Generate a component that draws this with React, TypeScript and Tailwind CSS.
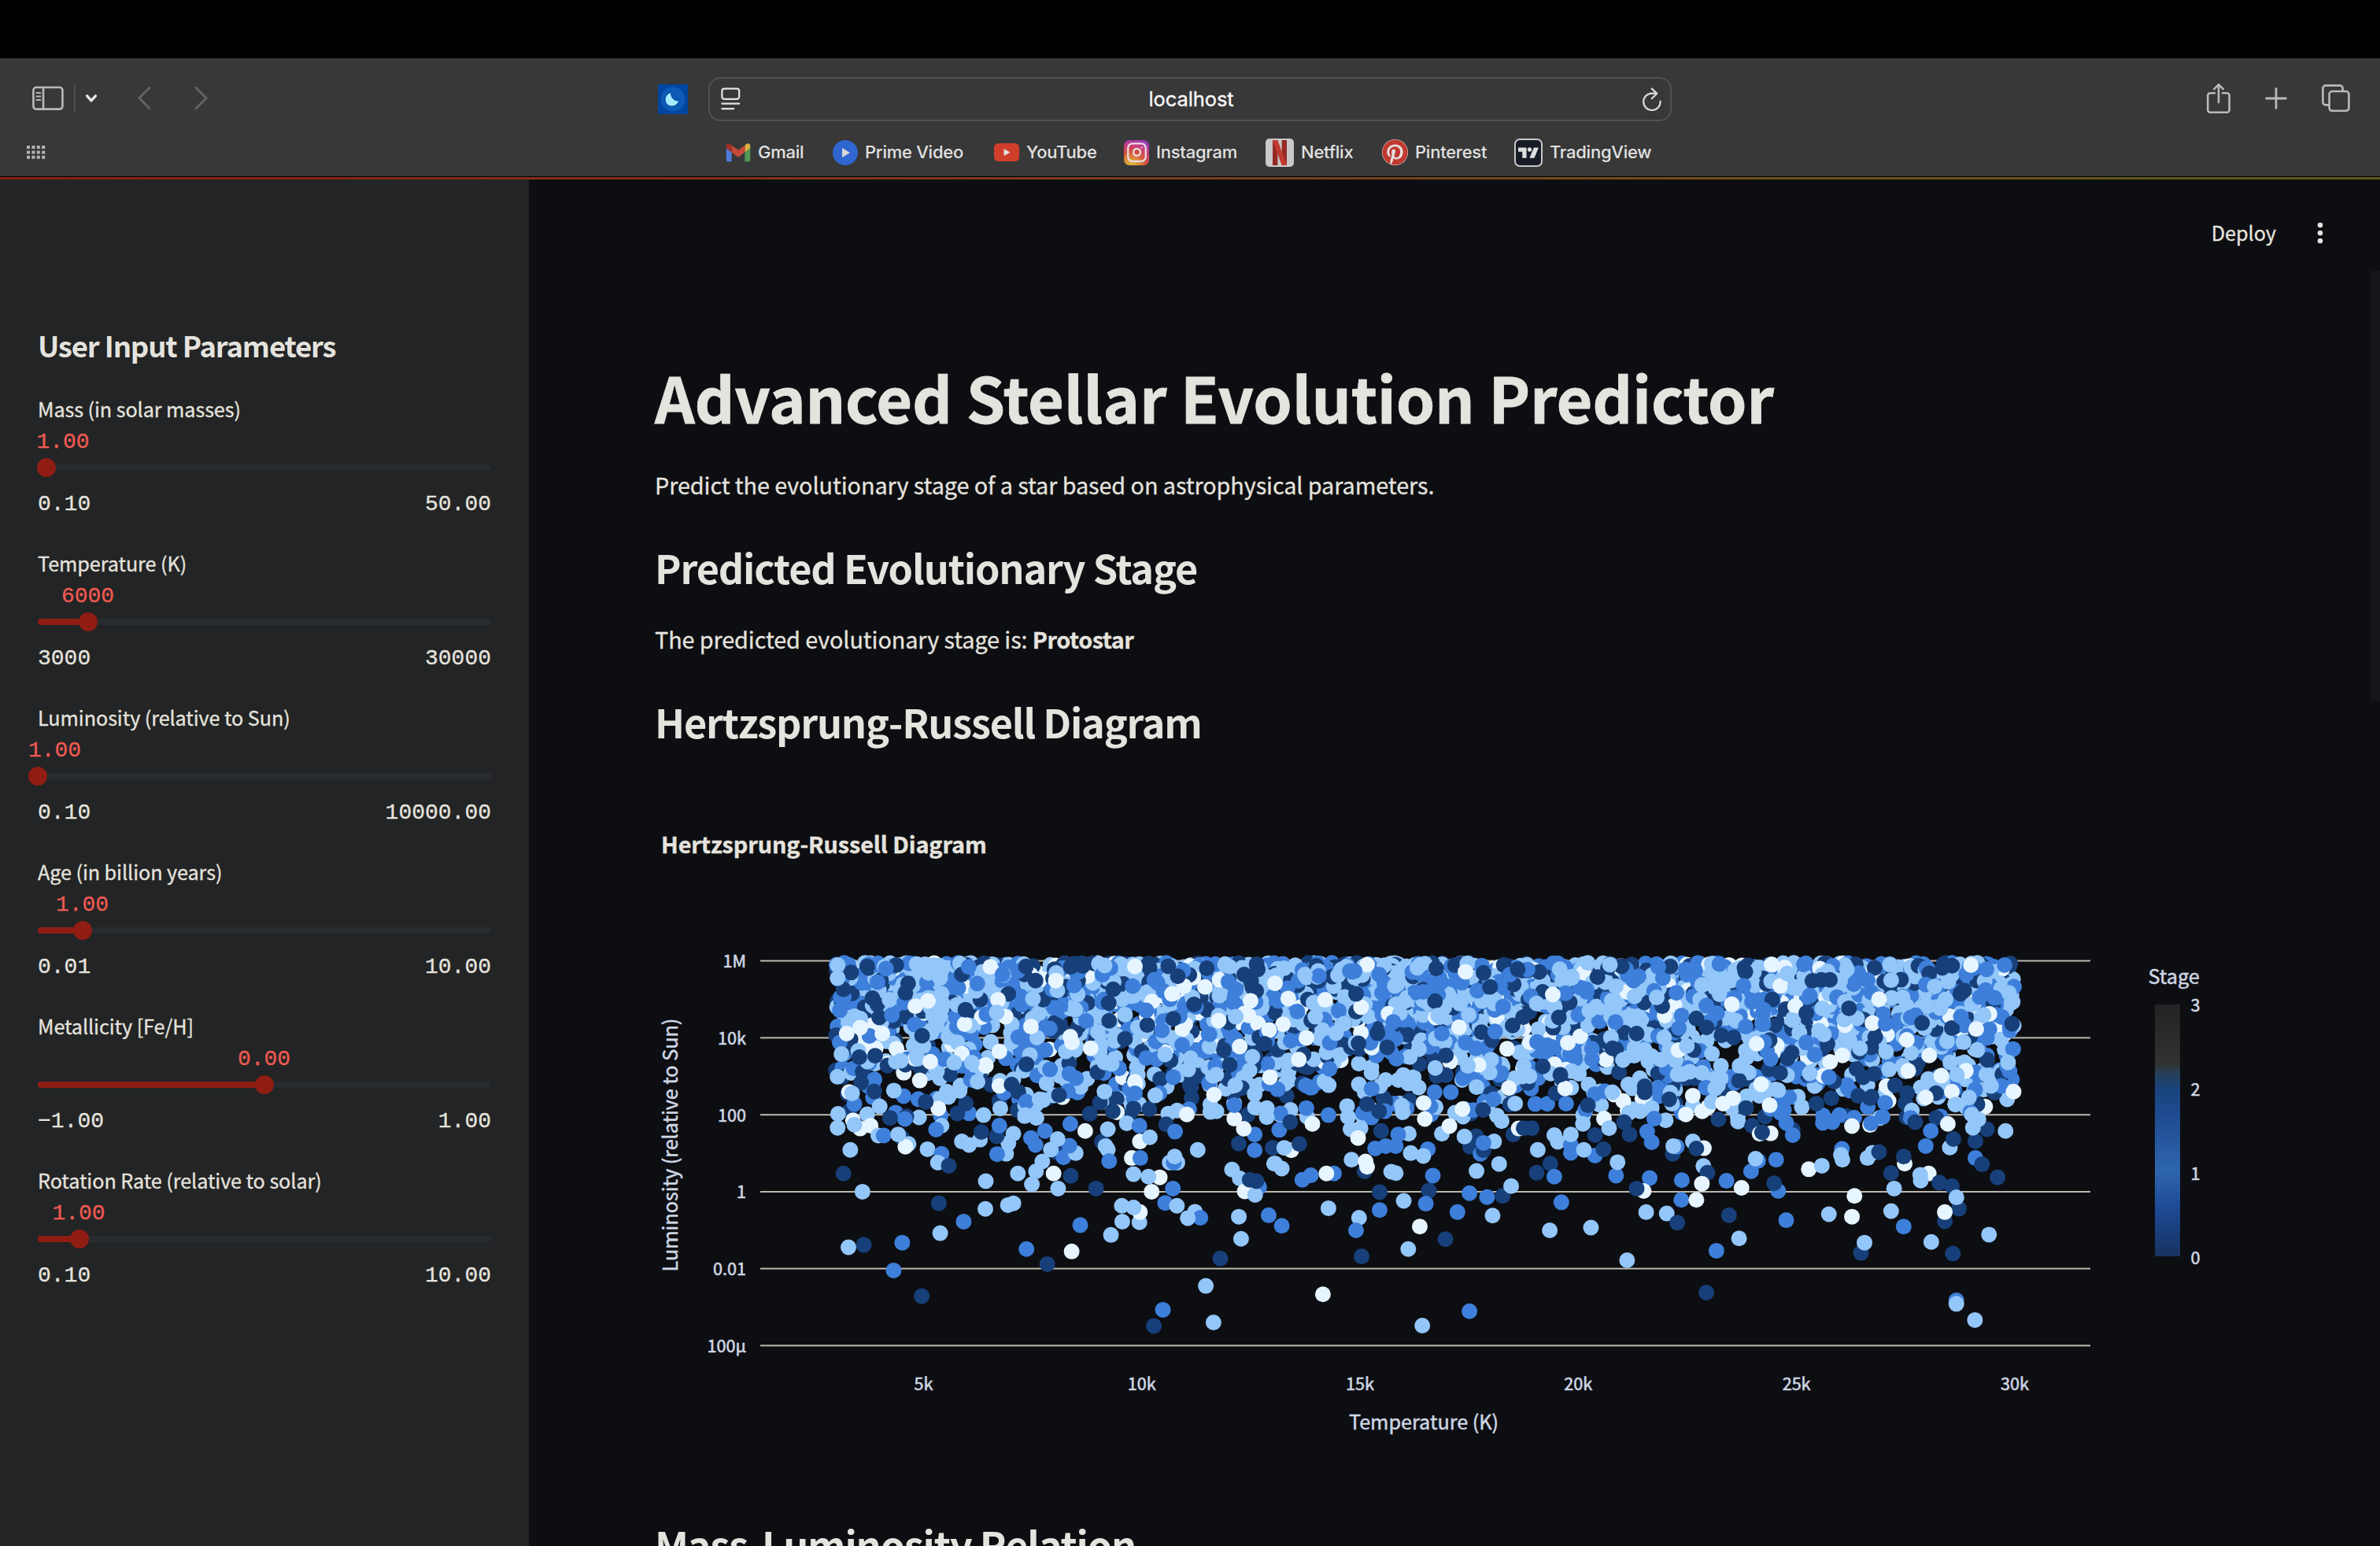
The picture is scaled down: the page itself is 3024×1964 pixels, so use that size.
import type { ReactNode } from 'react'
import { FaPinterest } from 'react-icons/fa'
import { SiTradingview } from 'react-icons/si'
import { Instagram } from 'lucide-react'

/* ---------- Browser chrome ---------- */

function SidebarIcon() {
  return (
    <svg className="w-10 h-8" viewBox="0 0 40 32" fill="none" stroke="#b9b9b9" strokeWidth="2.6">
      <rect x="1.4" y="2" width="37" height="27.6" rx="3.6" />
      <path d="M14 2v27.6" />
      <path d="M5.4 9h5M5.4 13.5h5M5.4 18h5" strokeWidth="2" strokeLinecap="round" />
    </svg>
  )
}

function ShareIcon() {
  return (
    <svg className="w-[32px] h-[40px]" viewBox="0 0 32 40" fill="none" stroke="#b9b9b9" strokeWidth="2.6" strokeLinecap="round" strokeLinejoin="round">
      <path d="M11 13.2H5.2a3 3 0 0 0-3 3v18.6a3 3 0 0 0 3 3h21.4a3 3 0 0 0 3-3V16.2a3 3 0 0 0-3-3H21" />
      <path d="M16 25V3M10.2 8.2 16 2.4l5.8 5.8" />
    </svg>
  )
}

function PlusIcon() {
  return (
    <svg className="w-[28px] h-[28px]" viewBox="0 0 28 28" stroke="#b9b9b9" strokeWidth="2.8" strokeLinecap="round">
      <path d="M14 1.6v24.8M1.6 14h24.8" />
    </svg>
  )
}

function TabsIcon() {
  return (
    <svg className="w-[36px] h-[36px]" viewBox="0 0 36 36" fill="none" stroke="#b9b9b9" strokeWidth="2.6" strokeLinejoin="round">
      <rect x="9.6" y="9" width="24.8" height="24.8" rx="3.6" />
      <path d="M26.6 9V5.200a3.600 3.600 0 0 0-3.600-3.600H5a3.600 3.600 0 0 0-3.600 3.600v17.600a3.600 3.600 0 0 0 3.600 3.600h4.600" />
    </svg>
  )
}

function MoonFavicon() {
  return (
    <svg className="w-[38px] h-[38px]" viewBox="0 0 38 38">
      <rect width="38" height="38" fill="#0045a0" />
      <circle cx="19" cy="19" r="15.4" fill="#0d5ab6" />
      <path d="M16.600 10.200c-5 1.800-8 5.600-7.400 10.200.6 4.800 4.400 7.800 8.800 7.600 4.400-.2 7.600-3.200 8.600-7.800-4.400 2-10.600-2.400-10-10z" fill="#a3ebff" stroke="#00409a" strokeWidth="1" />
    </svg>
  )
}

function ReaderIcon() {
  return (
    <svg className="w-[25px] h-[30px]" viewBox="0 0 25 30" fill="none" stroke="#e4e4e4" strokeWidth="2.2" strokeLinecap="round">
      <rect x="1.400" y="1.600" width="21.800" height="13.200" rx="3" />
      <path d="M1.400 20.600h21.800M1.400 27.200h14.800" />
    </svg>
  )
}

function ReloadIcon() {
  return (
    <svg className="w-[26px] h-[30px]" viewBox="0 0 26 30" fill="none" stroke="#dcdcdc" strokeWidth="2.2" strokeLinecap="round" strokeLinejoin="round">
      <path d="M23.600 17.600A10.700 10.700 0 1 1 12.900 7.600h5.600" />
      <path d="M12.700 1.600l6.600 6.200-6.600 6.400" />
    </svg>
  )
}

function GmailLogo() {
  return (
    <svg className="w-[32px] h-[24px]" viewBox="50 42 92 67">
      <path fill="#4e7cd6" d="M58 108h14V74L52 59v43c0 3.320 2.690 6 6 6" />
      <path fill="#519a57" d="M120 108h14c3.320 0 6-2.690 6-6V59l-20 15" />
      <path fill="#dcb040" d="M120 48v26l20-15v-8c0-7.420-8.470-11.650-14.400-7.200" />
      <path fill="#c74a3b" d="M72 74V48l24 18 24-18v26L96 92" />
      <path fill="#a03028" d="M52 51v8l20 15V48l-5.600-4.200c-5.940-4.450-14.400-.22-14.400 7.200" />
    </svg>
  )
}

function PrimeLogo() {
  return (
    <svg className="w-8 h-8" viewBox="0 0 32 32">
      <circle cx="16" cy="16" r="16" fill="#3066d0" />
      <path d="M12 10l10 6-10 6z" fill="#d8d8d8" />
    </svg>
  )
}

function YouTubeLogo() {
  return (
    <svg className="w-8 h-[23px]" viewBox="0 0 32 23">
      <rect width="32" height="23" rx="5.500" fill="#cf3f2b" />
      <path d="M12.500 7l8 4.500-8 4.500z" fill="#e4e0df" />
    </svg>
  )
}

function NetflixLogo() {
  return (
    <svg className="w-9 h-9" viewBox="0 0 36 36">
      <rect width="36" height="36" rx="5" fill="#c9c9c9" />
      <path d="M9 2h6.400v32H9zM20.600 2H27v32h-6.400z" fill="#952a24" />
      <path d="M9 2h6.400L27 34h-6.400z" fill="#c23a30" />
    </svg>
  )
}

function InstagramLogo() {
  return (
    <span className="flex w-8 h-8 items-center justify-center rounded-[7px] bg-[radial-gradient(circle_at_30%_105%,#e0b83c_0%,#dd9a3c_22%,#d5503f_48%,#c63c86_70%,#7a3fd6_100%)]">
      <Instagram className="w-[27px] h-[27px] text-[#eadfe4]" strokeWidth={2} />
    </span>
  )
}

function PinterestLogo() {
  return (
    <span className="flex w-[33px] h-[33px] items-center justify-center rounded-full bg-[#e3dedd]">
      <FaPinterest className="w-[33px] h-[33px] text-[#c0392f]" />
    </span>
  )
}

function TradingViewLogo() {
  return (
    <span className="flex w-9 h-9 items-center justify-center rounded-[7px] border-2 border-[#c9c9c9] bg-[#161b26]">
      <SiTradingview className="w-[26px] h-[26px] text-[#dedede]" />
    </span>
  )
}

function Bookmark({ icon, label, width }: { icon: ReactNode; label: string; width: string }) {
  return (
    <div className={`flex shrink-0 items-center gap-[9px] ${width}`}>
      {icon}
      <span className="whitespace-nowrap text-[22px] font-medium tracking-[-0.250px] text-[#e2e2e2] [-webkit-text-stroke:0]">{label}</span>
    </div>
  )
}

function BrowserChrome() {
  return (
    <header className="flex h-[150px] shrink-0 flex-col bg-[#383838] font-['Inter',sans-serif]">
      <div className="grid h-[103px] grid-cols-[836px_1288px_900px] items-center">
        <div className="flex items-center pb-0.5 pl-[41px]">
          <SidebarIcon />
          <span className="ml-[13px] h-9 w-0.5 bg-[#4e4e4e]" />
          <svg className="ml-[12px] h-3 w-4" viewBox="0 0 16 12" fill="none" stroke="#e6e6e6" strokeWidth="3.4" strokeLinecap="round" strokeLinejoin="round">
            <path d="M2.600 2.800 8 8.800l5.400-6" />
          </svg>
          <svg className="ml-[50px] h-8 w-5" viewBox="0 0 20 32" fill="none" stroke="#646464" strokeWidth="2.800" strokeLinecap="round" strokeLinejoin="round">
            <path d="M16 2.400 2.800 15.600 16 28.800" />
          </svg>
          <svg className="ml-[51px] h-8 w-5" viewBox="0 0 20 32" fill="none" stroke="#646464" strokeWidth="2.800" strokeLinecap="round" strokeLinejoin="round">
            <path d="M4 2.400 17.200 15.600 4 28.800" />
          </svg>
        </div>
        <div className="flex items-center gap-[26px]">
          <MoonFavicon />
          <div className="flex h-14 flex-1 items-center justify-between rounded-[15px] border-2 border-[#515151] pl-[14px] pr-[10px]">
            <ReaderIcon />
            <span className="text-[25.500px] leading-none tracking-[-0.100px] text-[#fafafa]">localhost</span>
            <ReloadIcon />
          </div>
        </div>
        <div className="flex items-center justify-end pb-[2px] pr-[38px]">
          <ShareIcon />
          <span className="ml-[43px] flex"><PlusIcon /></span>
          <span className="ml-[44px] flex"><TabsIcon /></span>
        </div>
      </div>
      <div className="flex h-[33px] items-center">
        <svg className="ml-[34px] h-[17px] w-[24px]" viewBox="0 0 24 17" fill="#b4b4b4">
          {[0, 6.400, 12.800, 19.200].map((x) =>
            [0, 6.400, 12.800].map((y) => <rect key={`${x}-${y}`} x={x} y={y} width="4" height="4" rx="0.600" />),
          )}
        </svg>
        <div className="ml-[864px] flex items-center">
          <Bookmark icon={<GmailLogo />} label="Gmail" width="w-[136px]" />
          <Bookmark icon={<PrimeLogo />} label="Prime Video" width="w-[205px]" />
          <Bookmark icon={<YouTubeLogo />} label="YouTube" width="w-[165px]" />
          <Bookmark icon={<InstagramLogo />} label="Instagram" width="w-[180px]" />
          <Bookmark icon={<NetflixLogo />} label="Netflix" width="w-[148px]" />
          <Bookmark icon={<PinterestLogo />} label="Pinterest" width="w-[168px]" />
          <Bookmark icon={<TradingViewLogo />} label="TradingView" width="w-[180px]" />
        </div>
      </div>
    </header>
  )
}

/* ---------- Sidebar ---------- */

type Param = { label: string; value: string; min: string; max: string; thumb: number; caption: number }

// thumb and caption are pixel offsets of their centres along the 576px track
const params: Param[] = [
  { label: 'Mass (in solar masses)', value: '1.00', min: '0.10', max: '50.00', thumb: 10.5, caption: 32 },
  { label: 'Temperature (K)', value: '6000', min: '3000', max: '30000', thumb: 64, caption: 63.5 },
  { label: 'Luminosity (relative to Sun)', value: '1.00', min: '0.10', max: '10000.00', thumb: 0, caption: 21.5 },
  { label: 'Age (in billion years)', value: '1.00', min: '0.01', max: '10.00', thumb: 57, caption: 56.5 },
  { label: 'Metallicity [Fe/H]', value: '0.00', min: '−1.00', max: '1.00', thumb: 288, caption: 287.5 },
  { label: 'Rotation Rate (relative to solar)', value: '1.00', min: '0.10', max: '10.00', thumb: 52.5, caption: 52 },
]

function ParamSlider({ p }: { p: Param }) {
  return (
    <div className="flex h-[196px] flex-col">
      <div className="h-10 text-[25.200px] leading-10 tracking-[-0.070px] text-[#e5e3de]">{p.label}</div>
      <div className="relative mt-[5px] h-9 font-['Liberation_Mono',monospace] text-[28px] leading-9 text-[#ee5a52]">
        <span className="absolute top-0 -translate-x-1/2" style={{ left: p.caption }}>
          {p.value}
        </span>
      </div>
      <div className="relative mt-[10px] h-2 rounded-full bg-[#282b30]">
        <div className="h-2 rounded-full bg-[#8f1d13]" style={{ width: p.thumb }} />
        <div className="absolute top-1/2 size-6 -translate-x-1/2 -translate-y-1/2 rounded-full bg-[#8f1d13]" style={{ left: p.thumb }} />
      </div>
      <div className="mt-[23px] flex h-10 justify-between font-['Liberation_Mono',monospace] text-[28px] leading-10 text-[#e5e3de]">
        <span>{p.min}</span>
        <span>{p.max}</span>
      </div>
    </div>
  )
}

function Sidebar() {
  return (
    <aside className="w-[672px] shrink-0 bg-[#232425] px-12 pt-[186px]">
      <h2 className="h-[50px] text-[36.500px] font-bold leading-[50px] tracking-[-1.150px] text-[#e5e3de] [-webkit-text-stroke:0]">
        User Input Parameters
      </h2>
      <div className="pt-[35px]">
        {params.map((p) => (
          <ParamSlider key={p.label} p={p} />
        ))}
      </div>
    </aside>
  )
}

/* ---------- Chart ---------- */

const colors: Record<string, string> = { L: '#93c6f9', M: '#3d7fda', D: '#17407a', W: '#e6f5ff' }

type Dot = { x: number; y: number; c: string }

// Deterministic generator so that the scatter looks the same on each load
function randomSource(seed: number) {
  let s = seed
  return () => {
    s = (s + 0x6d2b79f5) | 0
    let t = Math.imul(s ^ (s >>> 15), 1 | s)
    t = (t + Math.imul(t ^ (t >>> 7), 61 | t)) ^ t
    return ((t ^ (t >>> 14)) >>> 0) / 4294967296
  }
}

// Luminosity follows mass^3.5, with masses spread evenly up to 50
function denseDots(): Dot[] {
  const rnd = randomSource(42)
  return Array.from({ length: 3900 }, () => {
    const logL = 3.5 * Math.log10(3.5 + rnd() * 46.5)
    const k = rnd()
    return {
      x: 1062 + rnd() * 1498,
      y: 1220.6 + (6 - logL) * 48.85,
      c: k < 0.43 ? 'L' : k < 0.74 ? 'M' : k < 0.93 ? 'D' : 'W',
    }
  })
}

function parseDots(data: string, ox: number, sx: number): Dot[] {
  return data
    .trim()
    .split(/\s+/)
    .map((d) => {
      const [x, y] = d.slice(0, -1).split(',').map(Number)
      return { x: ox + x / sx, y: 1180 + y / 2.24, c: d.slice(-1) }
    })
}

const coolStars = `
763,108W 1083,107W 908,147W 780,202W 597,220W 625,205W 706,271W 445,298W 475,281W 524,298W 853,278W 940,307W 783,349W 752,387W
700,355W 630,378W 1192,163W 1165,185W 1238,165W 1393,155W 1326,240W 1380,288W 1315,335W 1382,422W 783,447W 648,511W 1083,435W
1258,472W 1198,528W 1303,540W 797,250W 985,340W
455,124D 438,172D 502,197D 555,103D 581,155D 575,182D 517,252D 612,304D 508,361D 477,438D 473,365D 863,147D 700,130D 941,108D
1025,211D 1035,172D 1178,135D 1214,215D 1168,256D 1061,313D 1370,327D 1280,345D 1293,387D 843,385D 810,443D 620,492D 690,525D
983,526D 1034,519D 1080,511D 1115,513D 915,473D 1209,422D 1000,408D 708,230D 1325,130D 1355,115D
462,498M 532,113M 715,108M 790,130M 1126,145M 1078,163M 825,308M 885,345M 938,412M 1108,232M 1108,368M 1168,422M 1083,468M
975,262M 1248,300M 1303,502M 430,232M 545,245M 895,400M 574,541M
425,103L 600,100L 425,140L 655,118L 655,185L 1016,104L 655,228L 777,238L 1061,244L 1270,190L 1306,250L 457,468L 872,485L
785,511L 748,530L 1128,474L 1250,521L 1348,470L 1375,536L 683,381L 722,381L 1201,400L 1263,415L 1016,380L 1343,364L 1375,510L
565,375L 518,505L 840,530L 865,538L 695,461L
425,566L 459,545W 475,568W 498,560W 462,557L 453,629L 438,696D 480,748L 449,906L 483,899D 568,893M 549,972M 611,1045D 515,588L
527,588M 541,538D 568,595D 582,612L 575,620W 559,585L 624,627L 655,640M 647,665L 671,674D 655,560L 643,571M 649,781D 704,833M
652,866L 700,605L 716,615L 740,600L 743,578D 752,797L 753,718L 802,786L 814,781L 798,640L 778,641M 803,610L 777,590D 814,583L
824,696L 783,560M 843,911M 889,954D 943,918W 853,595M 863,615M 884,575M 855,727L 864,690L 878,662L 903,696W 941,703D 908,635D
925,650M 952,638L 938,617M 912,598L 897,628L 913,739L 940,555M 973,575W 997,739D 962,843M 1010,605D 1018,618L 1023,628L
1026,661M 1023,570L 1030,871L 1055,833L 1093,835L 1094,806W 1054,788L 1080,793L 1065,553L 1093,560M 1094,605W 1116,593L
1076,652W 1095,652M 1080,698L 1138,707W 1113,705L 1120,748W 1167,739M 1150,780M 1176,788L 1160,665L 1177,665L 1169,665M
1171,648L 1152,556D 1172,577M 1222,629L 1216,805L 1228,822M 1200,823L 1272,938D 1240,1016L 1145,1084M 1125,1130D 1257,1120L
1298,685L 1315,710L 1326,747W 1358,735M 1349,757L 1337,714D 1352,718D 1313,819L 1318,882L 1313,611D 1348,630M 1348,585M
1324,569W 1379,815M 1388,623D 1391,668L`

const hotStars = `
183,102W 379,122W 553,187W 171,223W 366,280W 26,198W 47,372W 62,310W 583,324W 659,372W 959,327W 968,442W 1203,200W 1190,268W
1386,103W 1423,242W 1376,404W 1348,463W 1296,480W 1327,418W 1261,404W 1471,463W 912,482W 892,497W 818,528W 985,502W 373,513W
298,541W 405,387W 1130,360W 1303,360W
642,137D 565,252D 672,340D 1143,226D 1058,239D 839,255D 1348,282D 1329,111D 1194,111D 1108,482D 1078,497D 1171,422D 924,432D
938,510D 685,408D 161,185D 411,294D 473,275D 166,326D 720,298D 889,303D 1468,270D 1317,538D 207,519D 414,515D 736,448D 736,465D
785,485D 623,502D 1185,482D 1259,467D 771,220D 568,415D 428,165D 1088,145D 1105,145D 983,400D 1006,410D 483,115D 883,542D
415,125D 340,360D 1235,445D
763,108M 158,120M 207,130M 87,134M 454,221M 318,160M 332,298M 542,331M 438,292M 678,265M 950,208M 1216,270M 1065,190M 1453,103M
1417,115M 631,370M 400,340M 518,498M 435,485M 374,425M 1103,422M 1075,358M 1366,250M 1210,535M 1266,538M 1215,495M 62,510M
106,530M 880,240M 620,172M 1470,342M 1463,405M 987,370M 1180,145M 885,100M 820,130M 235,265M 192,455M
59,130L 368,213L 329,251L 478,497L 254,522L 384,390L 401,450L 243,157L 760,195L 716,192L 693,373L 605,412L 870,355L 1065,411L
1139,115L 1227,146L 1217,350L 1223,400L 1426,447L 1382,480L 1345,380L 820,333L 811,413L 1358,415L 1355,500L 1250,195L 1300,220L
495,390L 492,420L 220,430L 265,440L 1165,340L 750,510L 778,545L 1460,380L 850,410L 888,390L 80,250L 137,270L 925,390L 1411,245L
1467,210L
13,845M 32,630W 18,623L 48,612D 13,682L 0,668L 54,714M 71,701M 117,696M 102,696W 106,795L 74,555W 8,572M 30,550D 152,657L
178,690D 180,662W 183,677W 167,822L 161,858M 172,932D 150,570L 170,567L 165,595W 211,575D 199,625M 220,618M 240,618M 266,583L
245,585M 208,749D 208,800M 231,691L 240,695L 256,774L 265,911L 270,638L 304,627M 295,646L 314,702M 306,745D 300,782M 288,847W
339,883D 363,806M 332,583L 347,561W 388,620D 400,590D 377,591L 409,640M 415,630D 436,605L 415,609M 387,752M 422,763M 401,689L
446,669L 453,760D 470,732L 433,816L 387,1088M 293,1129L 95,1040W 451,547L 474,585D 485,568W 495,567D 511,567D 523,629L 548,668D
521,694D 556,705M 570,778M 547,858L 556,587L 563,606L 589,637M 589,615M 589,585L 637,645M 615,629L 654,627D 637,587D 613,555L
655,540W 665,567L 629,850L 679,702M 682,664L 695,550D 706,585D 741,577M 750,607M 755,540M 746,709M 734,746W 720,739D 739,806L
780,810L 801,836D 701,943L 792,640D 800,620M 793,618L 832,605L 854,624W 839,625D 853,675L 861,694D 810,715M 850,725W 809,771M
839,771W 899,717M 929,737W 904,815D 924,881L 879,916M 859,1035D 922,548L 948,690M 962,660M 957,654L 998,657M 1002,746M 994,724D
1018,829M 950,560D 965,583W 987,582W 970,579D 1031,572D 1018,552M 1031,587M 1063,684W 1089,674L 1103,812L 1154,760W 1149,819W
1167,922D 1174,893L 1129,626M 1127,643L 1130,657L 1091,552M 1110,550M 1149,561W 1185,558W 1187,553M 1180,652L 1190,637L
1203,635D 1227,695D 1254,668W 1252,648D 1233,739L 1227,803L 1252,847M 1302,696W 1285,700L 1286,716L 1323,722D 1348,732D
1362,796D 1357,764L 1334,832D 1334,806W 1307,891L 1350,924D 1422,870L 1439,707D 1395,652M 1408,670D 1395,604D 1418,570D
1390,566L 1401,542L 1296,618M 1344,622L 1351,598D 1306,575M 1275,550D 1340,555W 1455,575L 1357,1057M 1357,1067L 1394,1113L`

const dots: Dot[] = [...denseDots(), ...parseDots(coolStars, 820.3, 1.742), ...parseDots(hotStars, 1620.3, 1.568)]

const yTicks = [
  { label: '1M', y: 1220.6 },
  { label: '10k', y: 1318.4 },
  { label: '100', y: 1416.2 },
  { label: '1', y: 1514 },
  { label: '0.01', y: 1611.6 },
  { label: '100μ', y: 1709.4 },
]
const xTicks = ['5k', '10k', '15k', '20k', '25k', '30k']
const stageTicks = [3, 2, 1, 0]

function HRChart() {
  return (
    <svg className="-mt-px h-[982px] w-[2180px] shrink-0" viewBox="832 948 2180 982">
      <defs>
        <linearGradient id="stage" x1="0" y1="0" x2="0" y2="1">
          <stop offset="0" stopColor="#232323" />
          <stop offset="0.15" stopColor="#2b2c2c" />
          <stop offset="0.235" stopColor="#303332" />
          <stop offset="0.28" stopColor="#24405c" />
          <stop offset="0.335" stopColor="#1a447d" />
          <stop offset="0.45" stopColor="#1f4c92" />
          <stop offset="0.66" stopColor="#2e65ad" />
          <stop offset="0.79" stopColor="#1f4d9a" />
          <stop offset="0.92" stopColor="#193c76" />
          <stop offset="1" stopColor="#17335f" />
        </linearGradient>
      </defs>
      <text x="840" y="1084" fontSize="28.8" fontWeight="700" letterSpacing="-0.08" fill="#e5e3de" stroke="#e5e3de" strokeWidth="0.4">
        Hertzsprung-Russell Diagram
      </text>
      {yTicks.map((t) => (
        <rect key={t.label} x="966" y={t.y - 1} width="1690" height="2" fill="#bdb8ad" />
      ))}
      {dots.map((d, i) => (
        <circle key={i} cx={d.x} cy={d.y} r="10" fill={colors[d.c]} />
      ))}
      <g fill="#ced6e3" stroke="#ced6e3" strokeWidth="0.6" fontSize="21.6">
        {yTicks.map((t) => (
          <text key={t.label} x="948" y={t.y + 8.4} textAnchor="end">
            {t.label}
          </text>
        ))}
        {xTicks.map((t, i) => (
          <text key={t} x={1173.4 + i * 277.3} y="1765.6" textAnchor="middle">
            {t}
          </text>
        ))}
        {stageTicks.map((t, i) => (
          <text key={t} x="2783.4" y={1284.8 + i * 107} textAnchor="start">
            {t}
          </text>
        ))}
      </g>
      <g fill="#ced6e3" stroke="#ced6e3" strokeWidth="0.5" fontSize="25.2">
        <text x="1809" y="1816" textAnchor="middle">
          Temperature (K)
        </text>
        <text x="2729.5" y="1250">
          Stage
        </text>
        <text transform="translate(861 1454.6) rotate(-90)" textAnchor="middle" letterSpacing="-0.04">
          Luminosity (relative to Sun)
        </text>
      </g>
      <rect x="2738" y="1276" width="32" height="320" fill="url(#stage)" />
    </svg>
  )
}

/* ---------- Page ---------- */

function Main() {
  return (
    <main className="flex min-w-0 flex-1 flex-col overflow-hidden bg-[#0d0e12] text-[#e5e3de]">
      <div className="flex h-[116px] shrink-0 items-start justify-end pr-[70px]">
        <span className="mt-[42px] h-[50px] text-[25.200px] leading-[50px]">Deploy</span>
        <svg className="ml-[50px] mt-[52px] h-8 w-3" viewBox="0 0 12 32" fill="#e5e3de">
          <circle cx="6" cy="6" r="3.300" />
          <circle cx="6" cy="16" r="3.300" />
          <circle cx="6" cy="26" r="3.300" />
        </svg>
      </div>
      <div className="flex flex-1 justify-between pl-40">
        <div className="flex w-[2180px] flex-col whitespace-nowrap pt-[112px]">
          <h1 className="h-24 text-[79.200px] font-bold leading-[96px] tracking-[-0.200px] [-webkit-text-stroke:0.800px_currentColor]">
            Advanced Stellar Evolution Predictor
          </h1>
          <p className="mt-10 h-12 text-[28.800px] leading-[48px] tracking-[-0.080px]">
            Predict the evolutionary stage of a star based on astrophysical parameters.
          </p>
          <h3 className="mt-[49px] h-16 text-[50.400px] font-bold leading-[64px] tracking-[-1.150px] [-webkit-text-stroke:0]">
            Predicted Evolutionary Stage
          </h3>
          <p className="mt-[35px] h-12 text-[28.800px] leading-[48px] tracking-[-0.100px]">
            The predicted evolutionary stage is: <strong className="font-bold tracking-[-0.450px]">Protostar</strong>
          </p>
          <h3 className="mt-[49px] h-16 text-[50.400px] font-bold leading-[64px] tracking-[-1.220px] [-webkit-text-stroke:0]">
            Hertzsprung-Russell Diagram
          </h3>
          <HRChart />
          <h3 className="h-16 shrink-0 text-[50.400px] font-bold leading-[64px] tracking-[-1.200px] [-webkit-text-stroke:0]">
            Mass-Luminosity Relation
          </h3>
        </div>
        <div className="h-[547px] w-3 bg-[#141519]" />
      </div>
    </main>
  )
}

export default function App() {
  return (
    <div className="flex h-[1964px] w-[3024px] flex-col overflow-hidden bg-black font-['Noto_Sans_CJK_SC',sans-serif] [-webkit-text-stroke:0.300px_currentColor]">
      <div className="h-[74px] shrink-0" />
      <BrowserChrome />
      <div className="h-px shrink-0 bg-black" />
      <div className="h-[3px] shrink-0 bg-[linear-gradient(90deg,#8f1d13,#85321a_30%,#754a1c_65%,#5c5a1c)]" />
      <div className="flex min-h-0 flex-1">
        <Sidebar />
        <Main />
      </div>
    </div>
  )
}
